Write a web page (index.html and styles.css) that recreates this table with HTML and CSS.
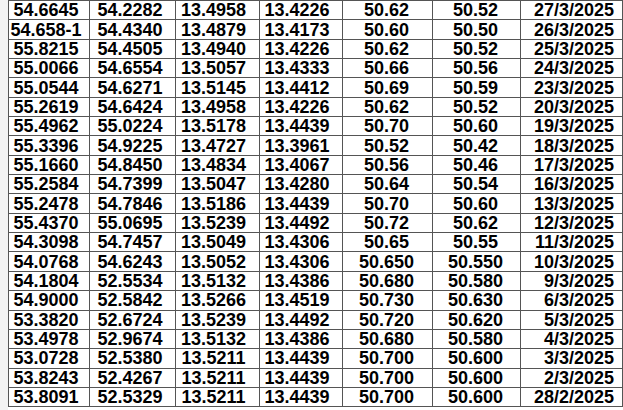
FILE: index.html
```html
<!DOCTYPE html>
<html>
<head>
<meta charset="utf-8">
<link rel="stylesheet" href="styles.css">
</head>
<body>
<div class="sheet">
<div class="row"><div class="c1">54.6645</div><div class="c2">54.2282</div><div class="c3">13.4958</div><div class="c4">13.4226</div><div class="c5">50.62</div><div class="c6">50.52</div><div class="c7">27/3/2025</div></div>
<div class="row"><div class="c1">54.658-1</div><div class="c2">54.4340</div><div class="c3">13.4879</div><div class="c4">13.4173</div><div class="c5">50.60</div><div class="c6">50.50</div><div class="c7">26/3/2025</div></div>
<div class="row"><div class="c1">55.8215</div><div class="c2">54.4505</div><div class="c3">13.4940</div><div class="c4">13.4226</div><div class="c5">50.62</div><div class="c6">50.52</div><div class="c7">25/3/2025</div></div>
<div class="row"><div class="c1">55.0066</div><div class="c2">54.6554</div><div class="c3">13.5057</div><div class="c4">13.4333</div><div class="c5">50.66</div><div class="c6">50.56</div><div class="c7">24/3/2025</div></div>
<div class="row"><div class="c1">55.0544</div><div class="c2">54.6271</div><div class="c3">13.5145</div><div class="c4">13.4412</div><div class="c5">50.69</div><div class="c6">50.59</div><div class="c7">23/3/2025</div></div>
<div class="row"><div class="c1">55.2619</div><div class="c2">54.6424</div><div class="c3">13.4958</div><div class="c4">13.4226</div><div class="c5">50.62</div><div class="c6">50.52</div><div class="c7">20/3/2025</div></div>
<div class="row"><div class="c1">55.4962</div><div class="c2">55.0224</div><div class="c3">13.5178</div><div class="c4">13.4439</div><div class="c5">50.70</div><div class="c6">50.60</div><div class="c7">19/3/2025</div></div>
<div class="row"><div class="c1">55.3396</div><div class="c2">54.9225</div><div class="c3">13.4727</div><div class="c4">13.3961</div><div class="c5">50.52</div><div class="c6">50.42</div><div class="c7">18/3/2025</div></div>
<div class="row"><div class="c1">55.1660</div><div class="c2">54.8450</div><div class="c3">13.4834</div><div class="c4">13.4067</div><div class="c5">50.56</div><div class="c6">50.46</div><div class="c7">17/3/2025</div></div>
<div class="row"><div class="c1">55.2584</div><div class="c2">54.7399</div><div class="c3">13.5047</div><div class="c4">13.4280</div><div class="c5">50.64</div><div class="c6">50.54</div><div class="c7">16/3/2025</div></div>
<div class="row"><div class="c1">55.2478</div><div class="c2">54.7846</div><div class="c3">13.5186</div><div class="c4">13.4439</div><div class="c5">50.70</div><div class="c6">50.60</div><div class="c7">13/3/2025</div></div>
<div class="row"><div class="c1">55.4370</div><div class="c2">55.0695</div><div class="c3">13.5239</div><div class="c4">13.4492</div><div class="c5">50.72</div><div class="c6">50.62</div><div class="c7">12/3/2025</div></div>
<div class="row"><div class="c1">54.3098</div><div class="c2">54.7457</div><div class="c3">13.5049</div><div class="c4">13.4306</div><div class="c5">50.65</div><div class="c6">50.55</div><div class="c7">11/3/2025</div></div>
<div class="row"><div class="c1">54.0768</div><div class="c2">54.6243</div><div class="c3">13.5052</div><div class="c4">13.4306</div><div class="c5">50.650</div><div class="c6">50.550</div><div class="c7">10/3/2025</div></div>
<div class="row"><div class="c1">54.1804</div><div class="c2">52.5534</div><div class="c3">13.5132</div><div class="c4">13.4386</div><div class="c5">50.680</div><div class="c6">50.580</div><div class="c7">9/3/2025</div></div>
<div class="row"><div class="c1">54.9000</div><div class="c2">52.5842</div><div class="c3">13.5266</div><div class="c4">13.4519</div><div class="c5">50.730</div><div class="c6">50.630</div><div class="c7">6/3/2025</div></div>
<div class="row"><div class="c1">53.3820</div><div class="c2">52.6724</div><div class="c3">13.5239</div><div class="c4">13.4492</div><div class="c5">50.720</div><div class="c6">50.620</div><div class="c7">5/3/2025</div></div>
<div class="row"><div class="c1">53.4978</div><div class="c2">52.9674</div><div class="c3">13.5132</div><div class="c4">13.4386</div><div class="c5">50.680</div><div class="c6">50.580</div><div class="c7">4/3/2025</div></div>
<div class="row"><div class="c1">53.0728</div><div class="c2">52.5380</div><div class="c3">13.5211</div><div class="c4">13.4439</div><div class="c5">50.700</div><div class="c6">50.600</div><div class="c7">3/3/2025</div></div>
<div class="row"><div class="c1">53.8243</div><div class="c2">52.4267</div><div class="c3">13.5211</div><div class="c4">13.4439</div><div class="c5">50.700</div><div class="c6">50.600</div><div class="c7">2/3/2025</div></div>
<div class="row"><div class="c1">53.8091</div><div class="c2">52.5329</div><div class="c3">13.5211</div><div class="c4">13.4439</div><div class="c5">50.700</div><div class="c6">50.600</div><div class="c7">28/2/2025</div></div>
</div>
</body>
</html>
```
FILE: styles.css
```css
html, body {
  margin: 0;
  padding: 0;
  background: #ffffff;
}
body {
  padding-left: 8px;
  background: linear-gradient(to right, #f3f3f3 0, #f3f3f3 8px, #ffffff 8px);
  height: 410px;
  overflow: hidden;
}
.sheet {
  display: grid;
  grid-template-columns: 80px 85px 83px 82px 89px 87px 101px;
  grid-template-rows: repeat(21, 18.35px);
  gap: 1px;
  padding: 1px;
  width: max-content;
  background: #555555;
  font-family: "Liberation Sans", Arial, sans-serif;
  font-weight: bold;
  font-size: 18px;
  color: #000000;
}
.row {
  display: contents;
}
.row > div {
  background: #ffffff;
  display: flex;
  align-items: center;
  justify-content: center;
  line-height: 18px;
  white-space: nowrap;
  overflow: hidden;
}
.c1 { padding-right: 6px; }
.c2 { padding-right: 5px; }
.c3 { padding-right: 8px; }
.c4 { padding-right: 8px; }
.c5 { padding-right: 2px; }
.c6 { padding-right: 2px; }
.row > .c7 {
  justify-content: flex-end;
  padding-right: 8px;
}
```
